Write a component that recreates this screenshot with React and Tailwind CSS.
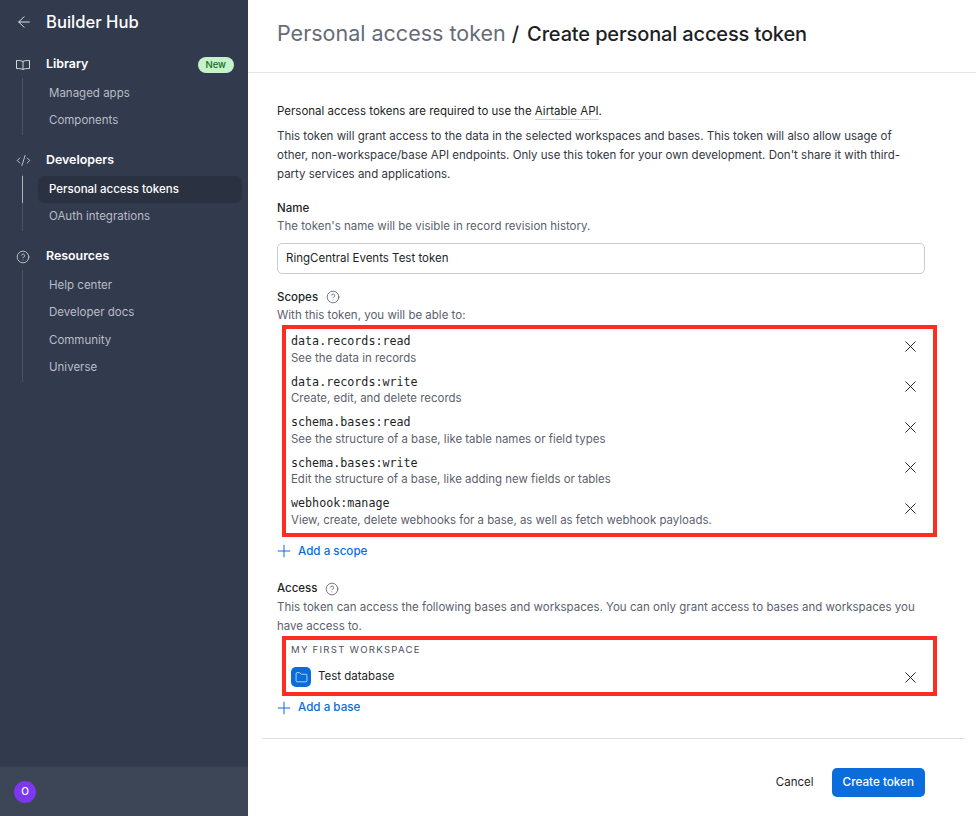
import React from 'react';
import { ArrowLeft, CircleHelp, CodeXml, Folder, Plus, X } from 'lucide-react';

const scopes = [
    ['data.records:read', 'See the data in records'],
    ['data.records:write', 'Create, edit, and delete records'],
    ['schema.bases:read', 'See the structure of a base, like table names or field types'],
    ['schema.bases:write', 'Edit the structure of a base, like adding new fields or tables'],
    ['webhook:manage', 'View, create, delete webhooks for a base, as well as fetch webhook payloads.'],
];

function BookIcon() {
    return (
        <svg width="14" height="10" viewBox="0 0 14 10" fill="none" stroke="currentColor" strokeWidth="0.9">
            <path d="M7 1.5C5.8.8 4 .5.5.5v8c3.5 0 5.3.3 6.5 1 1.2-.7 3-1 6.5-1v-8C10 .5 8.2.8 7 1.5zM7 1.5v8" />
        </svg>
    );
}

function NavSection({ icon, title, badge, children }) {
    return (
        <div className="mb-[12.5px]">
            <div className="flex items-center h-[27px] pl-[16px] pr-[14px]">
                <div className="w-[30px] text-[#e6e8ec]">{icon}</div>
                <span className="text-[12.4px] font-semibold text-white">{title}</span>
                {badge && (
                    <span className="ml-auto rounded-full bg-[#c6f2c9] text-[#0f6b1f] text-[9.5px] font-medium leading-[16px] px-[8px]">
                        {badge}
                    </span>
                )}
            </div>
            <div className="ml-[22px] border-l border-[#4a5364] pt-[1.5px]">{children}</div>
        </div>
    );
}

function NavItem({ children, active }) {
    return (
        <div className="relative pl-[15px] pr-[6px]">
            {active && <div className="absolute left-[-1px] top-0 bottom-0 w-px bg-[#aeb3bc]" />}
            <div
                className={`h-[27.5px] flex items-center pl-[11px] rounded-md text-[11.5px] ${
                    active ? 'bg-[#2a3242] text-white font-medium' : 'text-[#b9bdc6]'
                }`}
            >
                {children}
            </div>
        </div>
    );
}

function Help() {
    return <CircleHelp size={14} strokeWidth={1.25} className="text-[#444b57]" />;
}

function Remove({ className }) {
    return <X size={19} strokeWidth={1.25} className={`text-[#222] -m-[2.5px] shrink-0 ${className}`} />;
}

function AddLink({ children, className }) {
    return (
        <div className={`h-[20px] flex items-center gap-[7px] text-[#0b6ddb] text-[11.65px] font-medium ${className}`}>
            <Plus size={20} strokeWidth={1.2} className="-m-[3px]" /> {children}
        </div>
    );
}

export default function App() {
    return (
        <div className="flex h-[816px] w-[976px] overflow-hidden bg-white font-['Inter',sans-serif] text-[#1d1f25]">
            {/* Sidebar */}
            <aside className="w-[248px] shrink-0 bg-[#323a4d] flex flex-col">
                <div className="flex items-center h-[44px] pl-[15px]">
                    <div className="w-[31px] text-[#e8eaee]">
                        <ArrowLeft size={18} strokeWidth={1.25} />
                    </div>
                    <span className="text-[16.6px] font-medium text-white">Builder Hub</span>
                </div>
                <div className="pt-[7px] flex-1">
                    <NavSection icon={<BookIcon />} title="Library" badge="New">
                        <NavItem>Managed apps</NavItem>
                        <NavItem>Components</NavItem>
                    </NavSection>
                    <NavSection icon={<CodeXml size={15} strokeWidth={1.25} />} title="Developers">
                        <NavItem active>Personal access tokens</NavItem>
                        <NavItem>OAuth integrations</NavItem>
                    </NavSection>
                    <NavSection icon={<CircleHelp size={14} strokeWidth={1.25} />} title="Resources">
                        <NavItem>Help center</NavItem>
                        <NavItem>Developer docs</NavItem>
                        <NavItem>Community</NavItem>
                        <NavItem>Universe</NavItem>
                    </NavSection>
                </div>
                <div className="h-[50px] bg-[#3d4657] border-t border-[#374053] flex items-center pl-[14px]">
                    <div className="w-[22px] h-[22px] rounded-full bg-[#7c37ef] text-white text-[10px] font-medium flex items-center justify-center">
                        O
                    </div>
                </div>
            </aside>

            {/* Main */}
            <main className="flex-1 flex flex-col">
                <header className="h-[73px] shrink-0 border-b border-[#e4e4e6] flex items-center pl-[29px] pb-[5px]">
                    <span className="text-[#666c77] text-[21.5px]">Personal access token</span>
                    <span className="ml-[6px] mr-[8px] text-[20px] font-medium">/</span>
                    <span className="text-[20px] font-medium tracking-[-0.14px]">Create personal access token</span>
                </header>

                <div className="pl-[29px] pr-[51px] pt-[29px] text-[11.5px] leading-[19px]">
                    <p className="mb-[6px]">
                        Personal access tokens are required to use the{' '}
                        <span className="underline decoration-[#d5d7da] underline-offset-4">Airtable API</span>.
                    </p>
                    <p className="text-[#33373f]">
                        This token will grant access to the data in the selected workspaces and bases. This token will also
                        allow usage of other, non-workspace/base API endpoints. Only use this token for your own development.
                        Don't share it with third-party services and applications.
                    </p>

                    <div className="mt-[15px] font-medium leading-[18px]">Name</div>
                    <div className="text-[#5b616c]">The token's name will be visible in record revision history.</div>
                    <div className="mt-[7px] h-[31px] border border-[#c9cbcf] rounded-[5px] flex items-center pl-[8px]">
                        RingCentral Events Test token
                    </div>

                    <div className="mt-[14px] flex items-center gap-[8px] font-medium leading-[18px]">
                        Scopes <Help />
                    </div>
                    <div className="text-[#5b616c]">With this token, you will be able to:</div>
                </div>

                <div className="ml-[34px] mr-[39px] h-[212px] border-[4px] border-[#ff2d21] pl-[5px] pr-[16px] flex flex-col">
                    {scopes.map(([name, desc]) => (
                        <div key={name} className="flex items-center h-[40.5px] shrink-0">
                            <div className="flex-1">
                                <div className="font-['DejaVu_Sans_Mono',monospace] text-[11.7px] leading-[16.5px]">{name}</div>
                                <div className="text-[11.45px] leading-[16px] text-[#5b616c]">{desc}</div>
                            </div>
                            <Remove className="mb-[4px]" />
                        </div>
                    ))}
                </div>

                <div className="pl-[29px] pr-[51px] text-[11.5px] leading-[19px]">
                    <AddLink className="mt-[4px]">Add a scope</AddLink>
                    <div className="mt-[18px] flex items-center gap-[8px] font-medium">
                        Access <Help />
                    </div>
                    <div className="text-[#5b616c]">
                        This token can access the following bases and workspaces. You can only grant access to bases and
                        workspaces you have access to.
                    </div>
                </div>

                <div className="ml-[34px] mr-[39px] h-[60px] border-[4px] border-[#ff2d21] pl-[5px] pr-[16px]">
                    <div className="text-[9.6px] tracking-[0.13em] leading-[16px] mt-[2px] text-[#4d525c]">MY FIRST WORKSPACE</div>
                    <div className="flex items-center mt-[9px]">
                        <div className="w-[20px] h-[20px] rounded-[5px] bg-[#0b6ddb] flex items-center justify-center">
                            <Folder size={13} strokeWidth={1.25} className="text-white" />
                        </div>
                        <span className="ml-[7px] flex-1 text-[11.5px]">Test database</span>
                        <Remove />
                    </div>
                </div>

                <div className="pl-[29px]">
                    <AddLink className="mt-[2px]">Add a base</AddLink>
                </div>

                <div className="ml-[14px] mr-[11px] mt-[20px] border-t border-[#dedfe1] pt-[29px] pr-[40px] flex justify-end items-center text-[11.7px]">
                    <span className="mr-[18px] text-[11.5px]">Cancel</span>
                    <div className="h-[29px] px-[11px] pt-[1px] rounded-[5px] bg-[#0b6ddb] text-white font-medium flex items-center">
                        Create token
                    </div>
                </div>
            </main>
        </div>
    );
}
